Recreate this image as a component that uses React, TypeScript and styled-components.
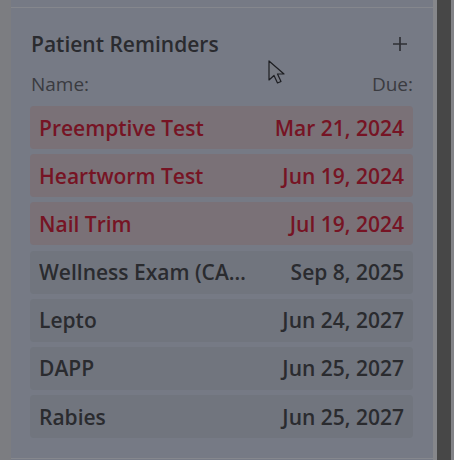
import React from "react";
import styled, { createGlobalStyle } from "styled-components";

const Global = createGlobalStyle`
  html, body { margin: 0; padding: 0; background: #7c7d81; }
  body { font-family: "Open Sans", "Noto Sans", sans-serif; }
`;

const Page = styled.div`
  display: flex;
  height: 460px;
  width: 454px;
  overflow: hidden;
  position: relative;
`;

const Column = styled.div`
  margin-left: 11px;
  width: 422px;
  display: flex;
  flex-direction: column;
  background: #767a85;
`;

const PrevSection = styled.div`
  height: 7px;
  border-bottom: 1px solid #85878d;
  flex-shrink: 0;
`;

const Section = styled.section`
  padding: 21px 20px 0 19px;
  height: 451px;
  box-sizing: border-box;
  border-bottom: 1px solid #85878d;
  flex-shrink: 0;
`;

const Header = styled.div`
  display: flex;
  justify-content: space-between;
  align-items: center;
  padding: 0 5px 0 1px;
  height: 30px;
`;

const Title = styled.h2`
  margin: 0;
  font-size: 21px;
  font-weight: 600;
  color: #2a2b2f;
`;

const AddButton = styled.button`
  border: none;
  background: none;
  padding: 0;
  width: 16px;
  height: 16px;
  display: flex;
  align-items: center;
  justify-content: center;
  cursor: pointer;
`;

const Labels = styled.div`
  display: flex;
  justify-content: space-between;
  padding: 0 0 0 1px;
  margin-top: 12px;
  font-size: 19px;
  color: #3a3b40;
`;

const List = styled.div`
  display: flex;
  flex-direction: column;
  gap: 5.2px;
  margin-top: 9px;
`;

const Row = styled.div<{ $overdue?: boolean }>`
  display: flex;
  justify-content: space-between;
  align-items: center;
  height: 43px;
  padding: 0 9px;
  border-radius: 4px;
  background: ${(p) => (p.$overdue ? "#7a7177" : "#71757e")};
  color: ${(p) => (p.$overdue ? "#761424" : "#2a2b2f")};
  font-size: 21px;
  font-weight: 600;
`;

const Name = styled.span`
  overflow: hidden;
  white-space: nowrap;
  text-overflow: ellipsis;
  max-width: 212px;
`;

const Due = styled.span`
  white-space: nowrap;
`;

const Gutter = styled.div`
  width: 4px;
  background: #86878b;
`;

const Scrollbar = styled.div`
  width: 14px;
  background: #474747;
`;

const Edge = styled.div`
  width: 3px;
  background: #828387;
`;

const Cursor = styled.svg`
  position: absolute;
  left: 268px;
  top: 60px;
`;

const reminders = [
  { name: "Preemptive Test", due: "Mar 21, 2024", overdue: true },
  { name: "Heartworm Test", due: "Jun 19, 2024", overdue: true },
  { name: "Nail Trim", due: "Jul 19, 2024", overdue: true },
  { name: "Wellness Exam (CANINE)", due: "Sep 8, 2025", overdue: false },
  { name: "Lepto", due: "Jun 24, 2027", overdue: false },
  { name: "DAPP", due: "Jun 25, 2027", overdue: false },
  { name: "Rabies", due: "Jun 25, 2027", overdue: false },
];

export default function App() {
  return (
    <Page>
      <Global />
      <Column>
        <PrevSection />
        <Section>
          <Header>
            <Title>Patient Reminders</Title>
            <AddButton aria-label="Add reminder">
              <svg width="16" height="16" viewBox="0 0 16 16">
                <path d="M8 1v14M1 8h14" stroke="#2f3035" strokeWidth="1.7" />
              </svg>
            </AddButton>
          </Header>
          <Labels>
            <span>Name:</span>
            <span>Due:</span>
          </Labels>
          <List>
            {reminders.map((r) => (
              <Row key={r.name} $overdue={r.overdue}>
                <Name>{r.name}</Name>
                <Due>{r.due}</Due>
              </Row>
            ))}
          </List>
        </Section>
      </Column>
      <Gutter />
      <Scrollbar />
      <Edge />
      <Cursor width="20" height="28" viewBox="0 0 20 28">
        <path
          d="M1 1 L1 20 L6 15.5 L9.5 23 L13 21.5 L9.5 14 L16 14 Z"
          fill="#777a82"
          stroke="#1d1e22"
          strokeWidth="1.2"
          strokeLinejoin="round"
        />
      </Cursor>
    </Page>
  );
}
